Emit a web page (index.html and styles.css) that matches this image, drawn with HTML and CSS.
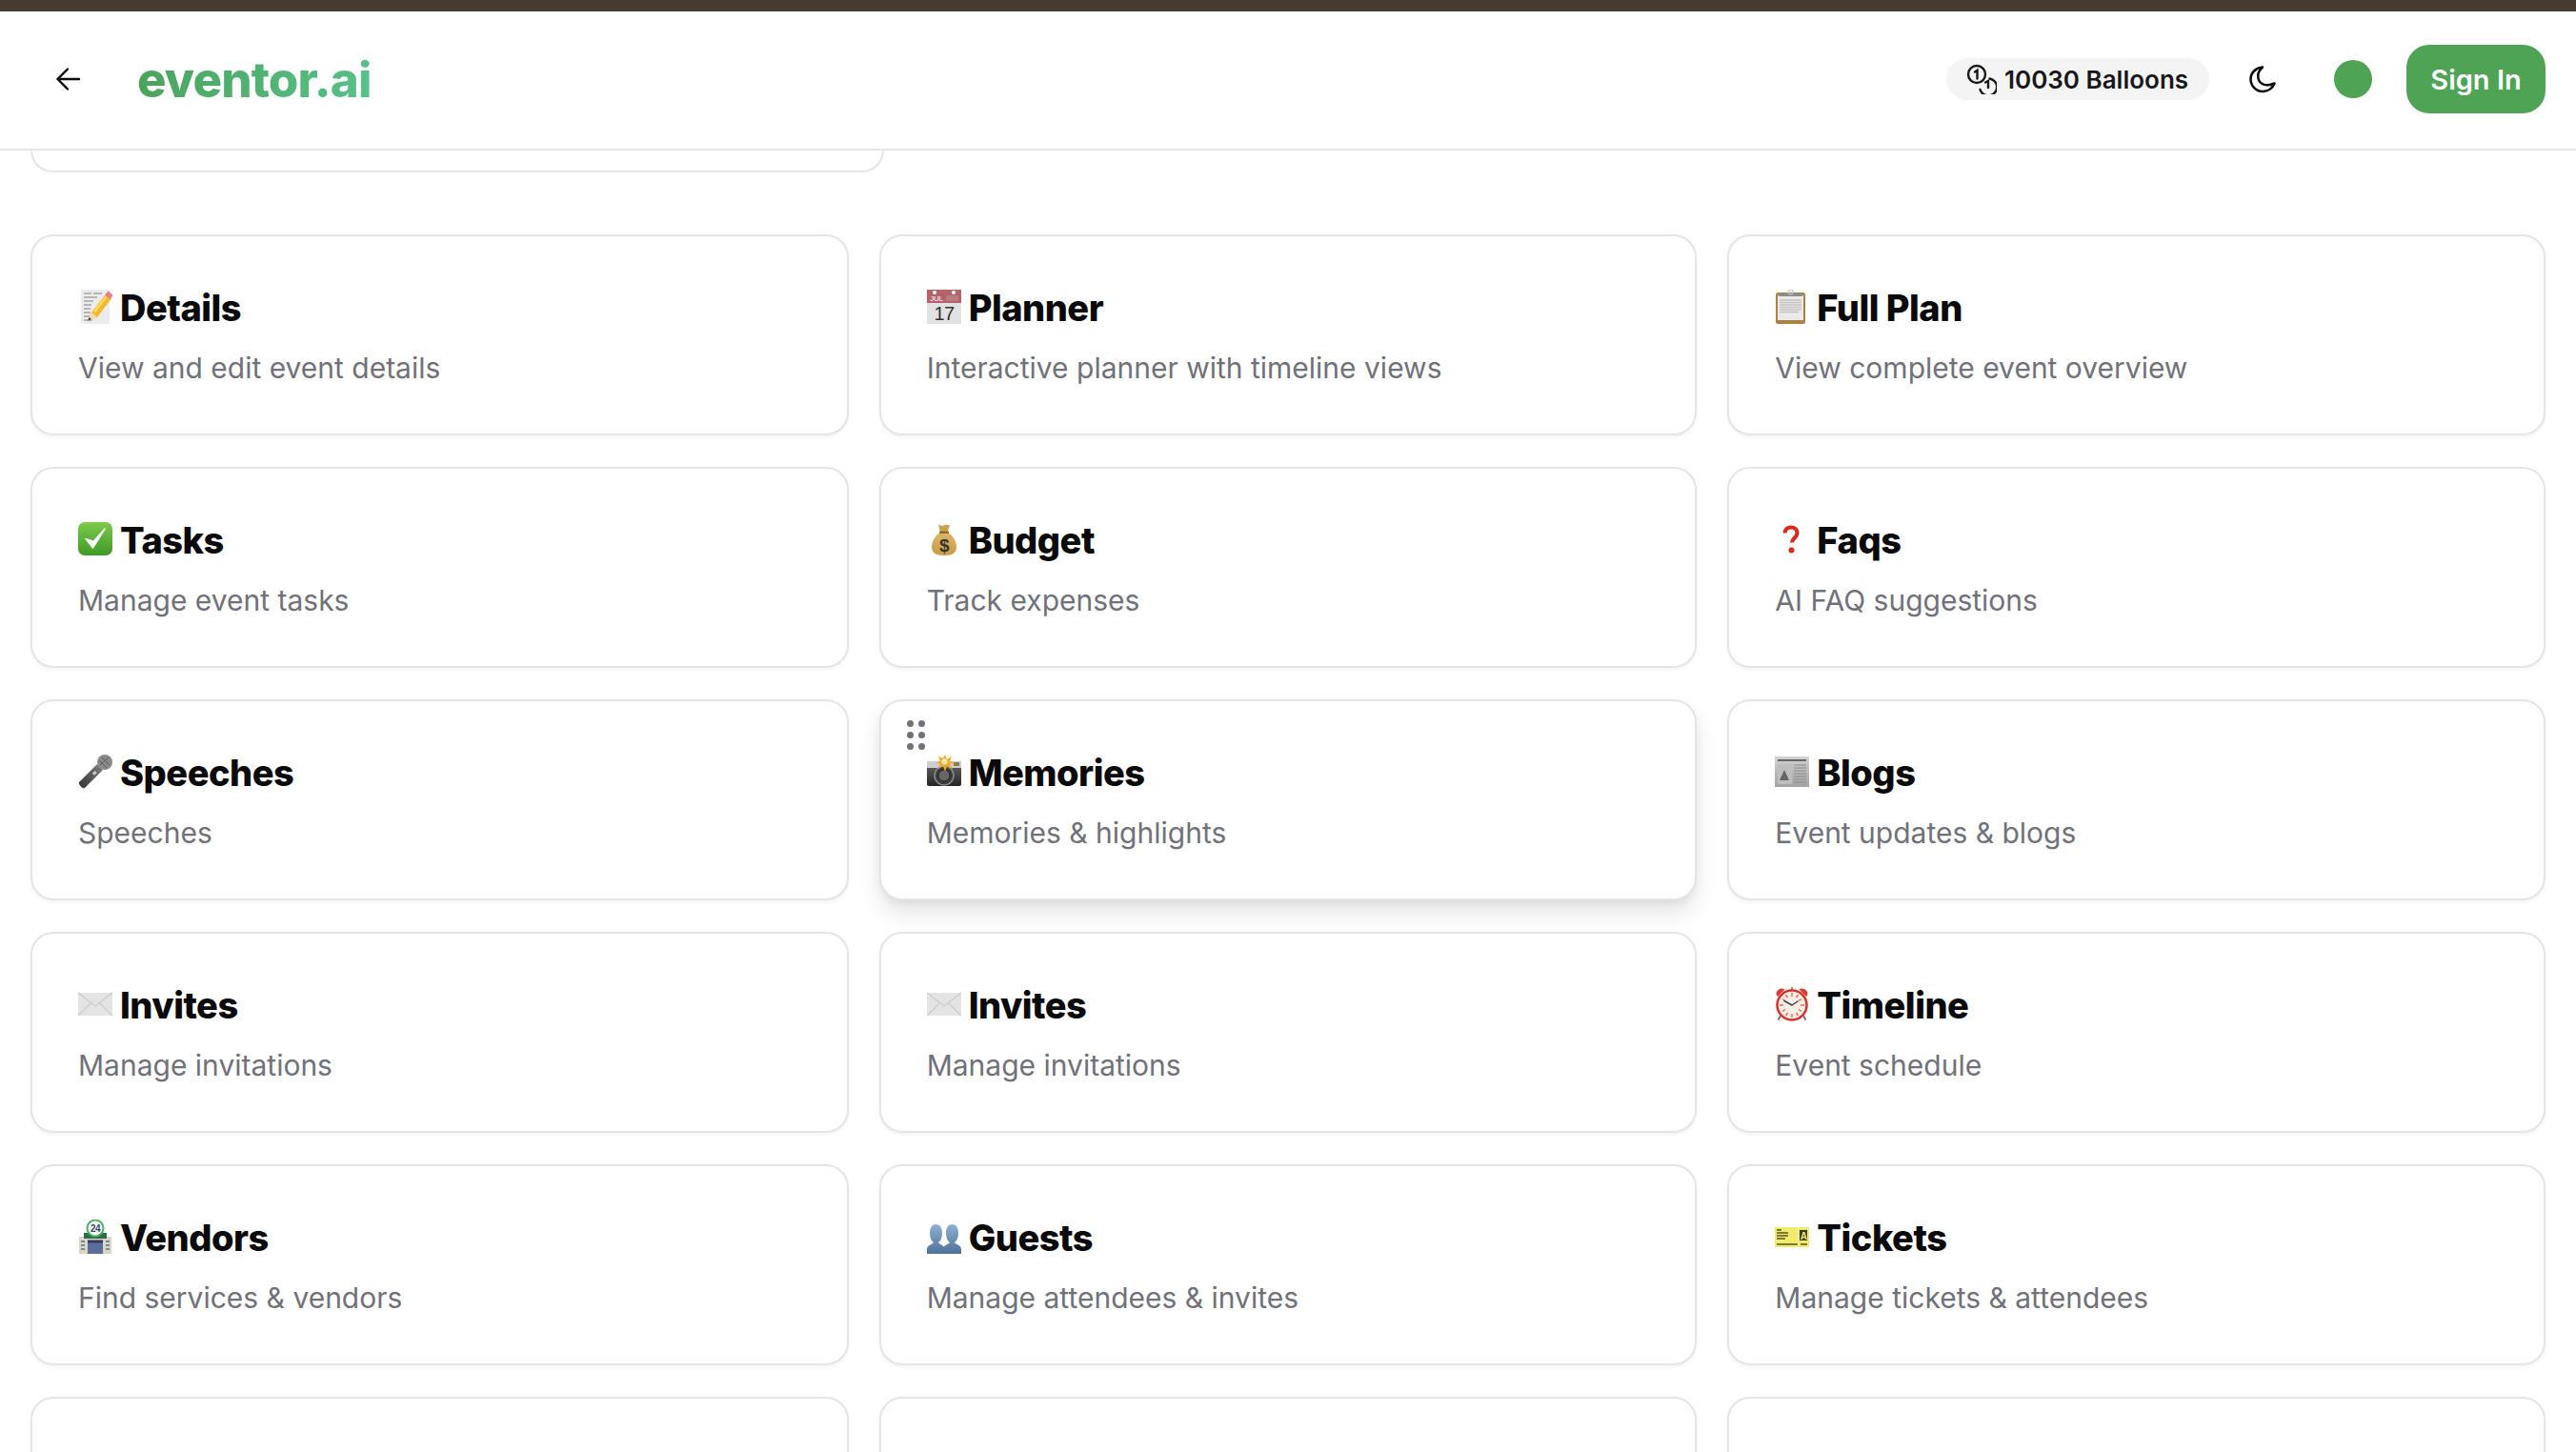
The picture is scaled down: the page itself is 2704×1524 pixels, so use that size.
FILE: index.html
```html
<!DOCTYPE html>
<html lang="en">
<head>
<meta charset="utf-8">
<title>eventor.ai</title>
<link rel="stylesheet" href="styles.css">
</head>
<body>
<div class="topbar"></div>
<header class="header">
  <div class="header-left">
    <button class="back" aria-label="Back">
      <svg width="30" height="30" viewBox="0 0 30 30" fill="none" stroke="#0a0a0a" stroke-width="2.4" stroke-linecap="round" stroke-linejoin="round"><path d="M14 4.500 3.500 15 14 25.500M3.500 15H26"/></svg>
    </button>
    <span class="logo">eventor.ai</span>
  </div>
  <div class="header-right">
    <div class="balance">
      <svg width="32" height="32" viewBox="0 0 32 32" fill="none" stroke="#18181b" stroke-width="2.400" stroke-linecap="round"><circle cx="11" cy="11" r="9"/><path d="M9 8.500 11.500 6.800V15.500"/><path d="M24.500 15.500A9 9 0 1 1 14.500 27"/><path d="M20 19.500 23 18V25"/></svg>
      <span>10030 Balloons</span>
    </div>
    <svg class="moon" width="30" height="30" viewBox="0 0 30 30" fill="none" stroke="#0a0a0a" stroke-width="2.500" stroke-linejoin="round"><path d="M15 2.500C11 6 9.500 10 10.500 14.500 11.800 20 18 23.500 27.500 19.500 25.500 24.800 20.500 28 15 28 8 28 2.500 22 2.500 15 2.500 8.500 8 3 15 2.500Z"/></svg>
    <span class="avatar"></span>
    <button class="signin">Sign In</button>
  </div>
</header>
<main class="main">
  <div class="partial"></div>
  <section class="grid">

    <article class="card">
      <h3 class="title"><span class="icon"><svg viewBox="0 0 36 36"><rect x="3" y="0" width="30" height="36" fill="#ececec"/><g stroke="#77777a" stroke-width=".9"><path d="M6 4h8M16 4h9M6 8h14M6 12h10M6 16h8M6 20h7M6 24h7M6 28h7M6 32h9"/></g><path d="M10 33 14 24 28 6l6 4.500L20 29Z" fill="#f2b92c"/><path d="m16 22 13-16 2 1.500-13 17Z" fill="#fbd75a"/><path d="m28 6 2.500-3.500a2 2 0 0 1 3 .3l2 2a2 2 0 0 1 0 2.700L34 10.500Z" fill="#e8837f"/><path d="m14 24 6 5-10 4Z" fill="#f3dcb0"/><path d="m10 33 1.500-4 2.500 2Z" fill="#444"/></svg></span>Details</h3>
      <p class="desc">View and edit event details</p>
    </article>

    <article class="card">
      <h3 class="title"><span class="icon"><svg viewBox="0 0 36 36"><rect y="14" width="36" height="22" fill="#e2e2e2"/><rect width="36" height="14" fill="#b3646b"/><circle cx="8" cy="3" r="2" fill="#fff"/><circle cx="28" cy="3" r="2" fill="#fff"/><text x="3" y="12" class="cal-month">JUL</text><path d="M20 7h13M20 9h13M20 11h13" stroke="#c98e92"/><text x="18" y="32" class="cal-day">17</text></svg></span>Planner</h3>
      <p class="desc">Interactive planner with timeline views</p>
    </article>

    <article class="card">
      <h3 class="title"><span class="icon"><svg viewBox="0 0 36 36"><rect x="1" y="3" width="31" height="33" rx="2.500" fill="#ab8147"/><rect x="3" y="6" width="27" height="26" fill="#eaeaea"/><path d="M5 11h23M5 13.500h23M5 16h23M5 18.500h23M5 21h23M5 23.500h20" stroke="#c4c4c4" stroke-width="1.300"/><rect x="4" y="4" width="25" height="3" fill="#8d8d8d"/><circle cx="16.500" cy="2.500" r="2.500" fill="none" stroke="#b7c2cc" stroke-width="1.200"/></svg></span>Full Plan</h3>
      <p class="desc">View complete event overview</p>
    </article>

    <article class="card">
      <h3 class="title"><span class="icon"><svg viewBox="0 0 36 36"><defs><linearGradient id="chk" x1="0" y1="0" x2="0" y2="1"><stop offset="0" stop-color="#7ccb4c"/><stop offset="1" stop-color="#3f9a26"/></linearGradient></defs><rect width="36" height="35" rx="7" fill="url(#chk)"/><path d="M8 17.500 15.500 27 28 7l-12 13.500Z" fill="#fff" stroke="#fff" stroke-width="1.500" stroke-linejoin="round"/></svg></span>Tasks</h3>
      <p class="desc">Manage event tasks</p>
    </article>

    <article class="card">
      <h3 class="title"><span class="icon"><svg viewBox="0 0 36 36"><defs><linearGradient id="bag" x1="0" y1="0" x2="0" y2="1"><stop offset="0" stop-color="#dcb868"/><stop offset="1" stop-color="#c99a45"/></linearGradient></defs><path d="M12 2.500 16 4l4-1.500 4 1-2.500 7h-7.500Z" fill="#c9a352"/><path d="M14 10.500h8C28 15 31 21 31 26c0 6-4 9-13 9S5 32 5 26c0-5 3-11 9-15.500Z" fill="url(#bag)"/><rect x="13" y="9.500" width="10" height="2.500" rx="1" fill="#8f6a2a"/><text x="18" y="31" class="bag-sign">$</text></svg></span>Budget</h3>
      <p class="desc">Track expenses</p>
    </article>

    <article class="card">
      <h3 class="title"><span class="icon"><svg viewBox="0 0 36 36"><path d="M10.500 11.500C10.500 7.500 13.500 5.500 17 5.500c3.700 0 6.500 2.200 6.500 5.800 0 5.200-5.500 5.700-5.500 10.200" fill="none" stroke="#d9281e" stroke-width="4.200"/><circle cx="17.500" cy="29.500" r="3" fill="#d9281e"/></svg></span>Faqs</h3>
      <p class="desc">AI FAQ suggestions</p>
    </article>

    <article class="card">
      <h3 class="title"><span class="icon"><svg viewBox="0 0 36 36"><defs><linearGradient id="mic" x1="0" y1="1" x2="1" y2="0"><stop offset="0" stop-color="#333"/><stop offset=".7" stop-color="#666"/><stop offset="1" stop-color="#8a8a8a"/></linearGradient></defs><path d="M1 29 20 10l6 6L7 35c-2 1.500-7-3.500-6-6Z" fill="url(#mic)"/><circle cx="28" cy="8" r="8" fill="#8b8b8b"/><path d="M22 6l8 8M25 3l8 8M23 11l9-8" stroke="#5d5d5d" stroke-width="1"/><rect x="15" y="18" width="4" height="3" transform="rotate(-42 17 19)" fill="#ccc"/></svg></span>Speeches</h3>
      <p class="desc">Speeches</p>
    </article>

    <article class="card card-active">
      <span class="grip"><i></i><i></i><i></i><i></i><i></i><i></i></span>
      <h3 class="title"><span class="icon"><svg viewBox="0 0 36 36"><defs><linearGradient id="cam" x1="0" y1="0" x2="0" y2="1"><stop offset="0" stop-color="#6b6b6b"/><stop offset="1" stop-color="#252525"/></linearGradient></defs><rect y="7" width="36" height="26" rx="2" fill="url(#cam)"/><rect y="7" width="36" height="7" fill="#cfcfcf"/><rect x="28" y="8" width="6" height="4" fill="#8b7f55"/><circle cx="18" cy="22" r="10" fill="#3c3c3c" stroke="#8b8b8b" stroke-width="1.500"/><circle cx="18" cy="22" r="6" fill="#666" stroke="#222"/><path d="M19 0l2 5 5-3-2 5 6 1-6 2 3 5-6-3-2 6-2-6-5 3 2-5-5-2 5-1-2-5 5 2Z" fill="#f9a825"/><circle cx="18.500" cy="7.500" r="3" fill="#fff3c0"/></svg></span>Memories</h3>
      <p class="desc">Memories &amp; highlights</p>
    </article>

    <article class="card">
      <h3 class="title"><span class="icon"><svg viewBox="0 0 36 36"><defs><linearGradient id="news" x1="0" y1="0" x2="0" y2="1"><stop offset="0" stop-color="#d2d2d2"/><stop offset="1" stop-color="#a2a2a2"/></linearGradient></defs><rect y="2" width="36" height="32" fill="url(#news)"/><path d="M3 6h30" stroke="#666" stroke-width="2"/><rect x="3" y="10" width="15" height="21" fill="#bdbdbd"/><path d="m5 27 5-11 5 11Z" fill="#666"/><path d="M20 11h13M20 14h13M20 17h13M20 20h13M20 23h13M20 26h13M20 29h13" stroke="#8a8a8a"/></svg></span>Blogs</h3>
      <p class="desc">Event updates &amp; blogs</p>
    </article>

    <article class="card">
      <h3 class="title"><span class="icon"><svg viewBox="0 0 36 36"><rect y="6" width="36" height="24" fill="#e4e4e4"/><path d="M0 6l18 14L36 6M0 30l13-13M36 30 23 17" fill="none" stroke="#cbcbcd" stroke-width="1.200"/></svg></span>Invites</h3>
      <p class="desc">Manage invitations</p>
    </article>

    <article class="card">
      <h3 class="title"><span class="icon"><svg viewBox="0 0 36 36"><rect y="6" width="36" height="24" fill="#e4e4e4"/><path d="M0 6l18 14L36 6M0 30l13-13M36 30 23 17" fill="none" stroke="#cbcbcd" stroke-width="1.200"/></svg></span>Invites</h3>
      <p class="desc">Manage invitations</p>
    </article>

    <article class="card">
      <h3 class="title"><span class="icon"><svg viewBox="0 0 36 36"><path d="M1.500 8a6 6 0 0 1 9-5.500L3 10ZM34.500 8a6 6 0 0 0-9-5.500L33 10Z" fill="#d93a32"/><path d="M17 0h2v3h-2z" fill="#999"/><path d="m6 30-2.500 4.500M30 30l2.500 4.500" stroke="#777" stroke-width="2"/><circle cx="18" cy="19" r="15.500" fill="#f6efe8" stroke="#d6352d" stroke-width="2.500"/><path d="M18 6v4M18 28v4M5 19h4M27 19h4M11.500 8l2 3M24.500 8l-2 3M8 12.500l3 2M28 12.500l-3 2M8 25.500l3-2M28 25.500l-3-2M11.500 30l2-3M24.500 30l-2-3" stroke="#e26a5f" stroke-width="1.400"/><path d="M18 19 10 14.500M18 19l6-4" stroke="#444" stroke-width="1.500" stroke-linecap="round"/></svg></span>Timeline</h3>
      <p class="desc">Event schedule</p>
    </article>

    <article class="card">
      <h3 class="title"><span class="icon"><svg viewBox="0 0 36 36"><rect x="1" y="18" width="34" height="18" fill="#d9d6c8"/><rect x="6" y="14" width="24" height="6" fill="#2f6b43"/><rect x="10" y="24" width="16" height="12" fill="#5b6d99"/><rect x="10" y="21.500" width="16" height="3" fill="#333a63"/><path d="M3 23h4M3 27h4M3 31h4M29 23h4M29 27h4M29 31h4" stroke="#7b8a92" stroke-width="2"/><circle cx="18" cy="9" r="8.500" fill="#fff" stroke="#4cb168" stroke-width="2"/><text x="18" y="12.500" class="store-num">24</text></svg></span>Vendors</h3>
      <p class="desc">Find services &amp; vendors</p>
    </article>

    <article class="card">
      <h3 class="title"><span class="icon"><svg viewBox="0 0 36 36"><defs><linearGradient id="bust" x1="0" y1="0" x2="0" y2="1"><stop offset="0" stop-color="#8fb0d3"/><stop offset="1" stop-color="#4f7199"/></linearGradient></defs><path d="M0 36v-5c0-4 6-5 7-7-3-2-4-6-4-10 0-6 3-9 6.500-9S16 8 16 14c0 4-1 8-4 10 1 2 6 3 7 7v5Z" fill="url(#bust)"/><path d="M17 36v-5c0-4 6-5 7-7-3-2-4-6-4-10 0-6 3-9 6.500-9S33 8 33 14c0 4-1 8-4 10 1 2 7 3 7 7v5Z" fill="url(#bust)"/></svg></span>Guests</h3>
      <p class="desc">Manage attendees &amp; invites</p>
    </article>

    <article class="card">
      <h3 class="title"><span class="icon"><svg viewBox="0 0 36 36"><rect y="8" width="36" height="21" fill="#f2ea6b"/><path d="M2 11h5M2 14h12M2 17h12M2 20h9M2 26h22M27 26h7" stroke="#58552a" stroke-width="1.300"/><path d="M24.500 8v21" stroke="#fff" stroke-width="1" stroke-dasharray="2 2"/><rect x="26" y="11" width="8" height="11" fill="#3c3b1e"/><text x="30" y="20.500" class="ticket-a">A</text></svg></span>Tickets</h3>
      <p class="desc">Manage tickets &amp; attendees</p>
    </article>

    <article class="card"></article>
    <article class="card"></article>
    <article class="card"></article>
  </section>
</main>
</body>
</html>
```

FILE: styles.css
```css
* { box-sizing: border-box; }
html, body { margin: 0; height: 100%; }
body {
  display: flex;
  flex-direction: column;
  background: #fff;
  color: #0a0a0a;
  font-family: Inter, "Liberation Sans", sans-serif;
  overflow: hidden;
}
.topbar { flex: none; height: 12px; background: #453a32; }
.header {
  flex: none;
  height: 146px;
  display: flex;
  align-items: center;
  justify-content: space-between;
  padding: 0 32px 2px 57px;
  border-bottom: 2px solid #e5e5e5;
}
.header-left { display: flex; align-items: center; gap: 57px; }
.back { width: 30px; height: 30px; padding: 0; border: 0; background: none; display: flex; }
.logo {
  font-size: 51px;
  font-weight: 800;
  letter-spacing: -.9px;
  background: linear-gradient(90deg, #4ba35b, #58c08a);
  -webkit-background-clip: text;
  background-clip: text;
  color: transparent;
}
.header-right { display: flex; align-items: center; }
.balance {
  height: 44px;
  width: 276px;
  display: flex;
  align-items: center;
  gap: 8px;
  padding-left: 21px;
  border-radius: 22px;
  background: #f4f4f5;
  color: #18181b;
  font-size: 26px;
  font-weight: 600;
}
.moon { margin-left: 41px; }
.avatar { width: 40px; height: 40px; margin-left: 60px; border-radius: 50%; background: #4ea354; }
.signin {
  width: 146px;
  height: 72px;
  margin-left: 36px;
  border: 0;
  border-radius: 24px;
  background: #4ea354;
  color: #fff;
  font: 600 29px Inter, "Liberation Sans", sans-serif;
}
.main { flex: 1; min-height: 0; overflow: hidden; padding: 0 32px; }
.partial {
  width: 896px;
  height: 23px;
  border: 2px solid #e5e5e5;
  border-top: 0;
  border-radius: 0 0 24px 24px;
  margin-bottom: 65px;
}
.grid {
  display: grid;
  grid-template-columns: repeat(3, 1fr);
  grid-auto-rows: 211px;
  gap: 33px 32px;
}
.card {
  position: relative;
  padding: 56px 48px 0;
  border: 2px solid #e5e5e5;
  border-radius: 24px;
  background: #fff;
  box-shadow: 0 2px 4px rgba(0, 0, 0, .05);
}
.card-active { box-shadow: 0 14px 24px rgba(0, 0, 0, .1), 0 4px 8px rgba(0, 0, 0, .05); }
.title {
  display: flex;
  align-items: center;
  height: 36px;
  margin: 0;
  padding-top: 1px;
  font-size: 38px;
  font-weight: 800;
  letter-spacing: -.5px;
  line-height: 36px;
  color: #0a0a0a;
}
.icon { width: 36px; height: 36px; margin: -1px 8px 0 0; flex: none; }
.icon svg { display: block; width: 36px; height: 36px; }
.desc {
  margin: 28px 0 0;
  font-size: 30px;
  line-height: 36px;
  color: #71717a;
}
.grip {
  position: absolute;
  left: 27px;
  top: 20px;
  display: grid;
  grid-template-columns: 7px 7px;
  grid-auto-rows: 7px;
  gap: 5px;
}
.grip i { border-radius: 50%; background: #71717a; }
.cal-month { font: 600 8px "Liberation Sans", sans-serif; fill: #e9cfd1; }
.cal-day { font: 400 20px "Liberation Sans", sans-serif; fill: #333; text-anchor: middle; }
.bag-sign { font: 700 19px "Liberation Sans", sans-serif; fill: #333; text-anchor: middle; }
.store-num { font: 700 10px "Liberation Sans", sans-serif; fill: #36406e; text-anchor: middle; }
.ticket-a { font: 700 10px "Liberation Sans", sans-serif; fill: #f2ea6b; text-anchor: middle; }
```
